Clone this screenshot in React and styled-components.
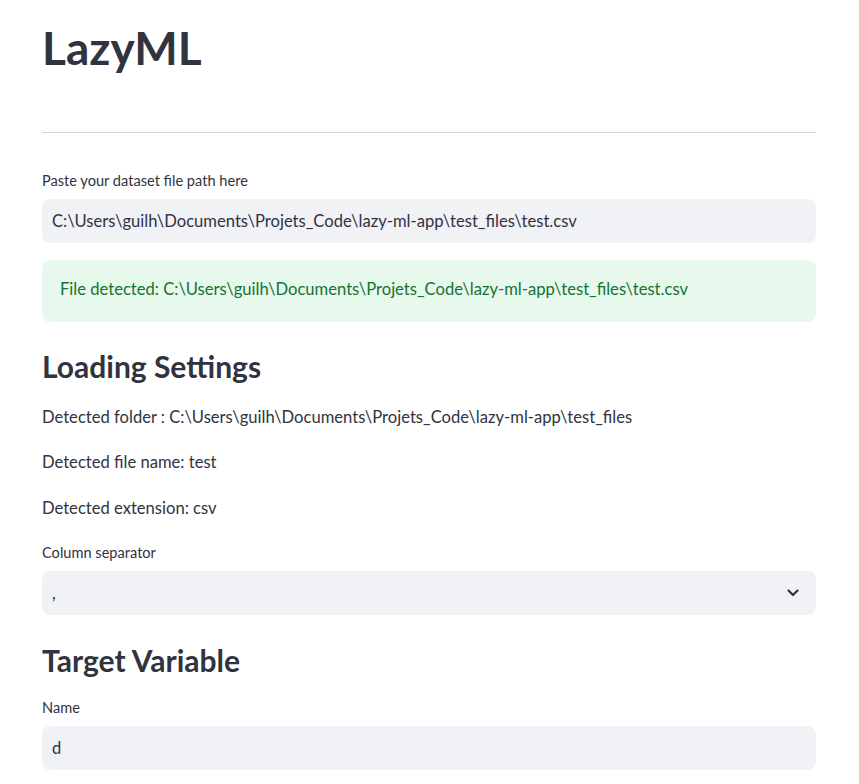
import React from "react";
import styled, { createGlobalStyle } from "styled-components";

const Global = createGlobalStyle`
  html, body { margin: 0; padding: 0; background: #ffffff; }
  body { font-family: Lato, "Noto Sans", sans-serif; color: #31333f; }
`;

const Page = styled.main`
  width: 774px;
  padding: 20px 0 0 42px;
  display: flex;
  flex-direction: column;
`;

const Title = styled.h1`
  margin: 0;
  font-size: 46px;
  line-height: 56px;
  font-weight: 700;
  color: #31333f;
`;

const Divider = styled.hr`
  margin: 56px 0 0;
  border: none;
  height: 1px;
  background: rgba(49, 51, 63, 0.2);
`;

const Label = styled.label`
  display: block;
  margin-top: ${(p) => p.$mt}px;
  font-size: 14.6px;
  line-height: 20px;
  color: #31333f;
`;

const Field = styled.div`
  margin-top: 8px;
  height: 44px;
  box-sizing: border-box;
  border-radius: 8px;
  background: #f0f2f6;
  display: flex;
  align-items: center;
  justify-content: space-between;
  padding: 0 17px 0 10px;
  font-size: 16.6px;
  color: #31333f;
`;

const Alert = styled.div`
  margin-top: 17px;
  border-radius: 8px;
  background: #e7f8ec;
  color: #177233;
  padding: 16px 18px 20px;
  font-size: 16.6px;
  line-height: 26px;
`;

const Heading = styled.h2`
  margin: ${(p) => p.$mt}px 0 0;
  font-size: 30px;
  line-height: 40px;
  font-weight: 700;
  color: #31333f;
`;

const Para = styled.p`
  margin: ${(p) => p.$mt}px 0 0;
  font-size: 16.6px;
  line-height: 24px;
`;

const Chevron = () => (
  <svg width="12" height="8" viewBox="0 0 12 8" aria-hidden="true">
    <polyline points="1.5,1.5 6,6 10.5,1.5" fill="none" stroke="#31333f" strokeWidth="2.2" strokeLinecap="round" strokeLinejoin="round" />
  </svg>
);

export default function App() {
  const path = "C:\\Users\\guilh\\Documents\\Projets_Code\\lazy-ml-app\\test_files";
  return (
    <>
      <Global />
      <Page>
        <Title>LazyML</Title>
        <Divider />
        <Label $mt={38}>Paste your dataset file path here</Label>
        <Field>{path}\test.csv</Field>
        <Alert>File detected: {path}\test.csv</Alert>
        <Heading $mt={24}>Loading Settings</Heading>
        <Para $mt={19}>Detected folder : {path}</Para>
        <Para $mt={21}>Detected file name: test</Para>
        <Para $mt={22}>Detected extension: csv</Para>
        <Label $mt={23}>Column separator</Label>
        <Field>
          <span>,</span>
          <Chevron />
        </Field>
        <Heading $mt={25}>Target Variable</Heading>
        <Label $mt={18}>Name</Label>
        <Field>d</Field>
      </Page>
    </>
  );
}
